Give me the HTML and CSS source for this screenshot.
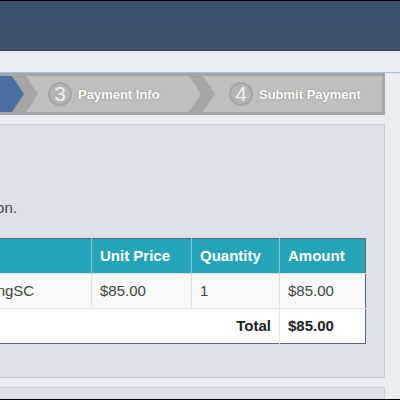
FILE: index.html
```html
<!DOCTYPE html>
<html>
<head>
<meta charset="utf-8">
<title>Checkout - Review Order</title>
<link rel="stylesheet" href="styles.css">
</head>
<body>
<header class="topbar"></header>
<main class="main">
  <div class="container">
    <nav class="steps">
      <div class="step step--done"><span class="step-num">1</span><span class="step-label">Select Items</span></div>
      <div class="step step--active"><span class="step-num">2</span><span class="step-label">Review Order</span></div>
      <div class="step"><span class="step-num">3</span><span class="step-label">Payment Info</span></div>
      <div class="step step--last"><span class="step-num">4</span><span class="step-label">Submit Payment</span></div>
    </nav>
    <section class="panel">
      <h2 class="panel-title">Review Order</h2>
      <p class="panel-text">Please review your order below for confirmation.</p>
      <table class="order">
        <colgroup>
          <col>
          <col class="col-price">
          <col class="col-qty">
          <col class="col-amount">
        </colgroup>
        <thead>
          <tr><th>Item</th><th>Unit Price</th><th>Quantity</th><th>Amount</th></tr>
        </thead>
        <tbody>
          <tr class="row-item"><td>Spring 2024 Registration - U9 Girls - WyomingSC</td><td>$85.00</td><td>1</td><td>$85.00</td></tr>
          <tr class="row-total"><td colspan="3" class="total-label">Total</td><td class="total-value">$85.00</td></tr>
        </tbody>
      </table>
    </section>
    <section class="panel panel--next"></section>
  </div>
</main>
</body>
</html>
```

FILE: styles.css
```css
html, body {
  overflow: hidden;
}
body {
  margin: 0;
  background: #e9ecf1;
  font-family: "Liberation Sans", Arial, sans-serif;
  color: #444;
}
body::after {
  content: "";
  position: fixed;
  left: 0;
  right: 0;
  bottom: 0;
  height: 1px;
  background: #000;
}
.topbar {
  height: 49px;
  background: #3d5170;
  border-top: 1px solid #000;
  border-bottom: 1px solid #2c3a50;
  margin-bottom: 21px;
}
.main {
  border-top: 1px solid #a2bfea;
  padding-right: 15px;
}
.container {
  margin-left: -331px;
}
.steps {
  display: flex;
  gap: 2px;
  height: 36px;
  background: #a6a6a6;
  border: 3px solid #a6a6a6;
}
.step {
  flex: 0 0 175px;
  display: flex;
  align-items: center;
  padding-left: 22px;
  box-sizing: border-box;
  background: #bfbfbf;
  clip-path: polygon(0 0, calc(100% - 12px) 0, 100% 50%, calc(100% - 12px) 100%, 0 100%, 12px 50%);
}
.step--done {
  background: #6f8fb8;
  clip-path: polygon(0 0, calc(100% - 12px) 0, 100% 50%, calc(100% - 12px) 100%, 0 100%);
}
.step--active {
  background: #4b6fa0;
}
.step--last {
  flex: 1 1 auto;
  padding-left: 26px;
  clip-path: polygon(0 0, 100% 0, 100% 100%, 0 100%, 12px 50%);
}
.step-num {
  flex: none;
  width: 20px;
  height: 20px;
  border: 2px solid #a5a5a5;
  border-radius: 50%;
  background: #b4b4b4;
  color: #efefef;
  font-size: 21px;
  line-height: 20px;
  display: flex;
  align-items: center;
  justify-content: center;
  margin-right: 6px;
}
.step-label {
  color: #fff;
  font-size: 13px;
  font-weight: bold;
  white-space: nowrap;
  text-shadow: 0 0 2px rgba(0, 0, 0, 0.35);
}
.panel {
  margin-top: 9px;
  background: #dce0e9;
  border: 1px solid #c7cdd9;
  padding: 18px 18px 18px 26px;
}
.panel--next {
  height: 40px;
}
.panel-title {
  margin: 0 0 29px;
  font-size: 20px;
  line-height: 26px;
  color: #333;
}
.panel-text {
  margin: 0 0 20px;
  font-size: 15px;
  line-height: 20px;
  color: #444;
}
.order {
  width: 100%;
  table-layout: fixed;
  border-collapse: collapse;
  border: 1px solid #5d6577;
  margin-bottom: 15px;
  font-size: 15px;
  line-height: 18px;
}
.col-price { width: 100px; }
.col-qty { width: 88px; }
.col-amount { width: 86px; }
.order th {
  background: #25a4b8;
  color: #fff;
  font-weight: bold;
  text-align: left;
  padding: 8px;
  border-right: 1px solid #86ccd7;
  white-space: nowrap;
}
.order th:last-child {
  border-right: none;
}
.order td {
  padding: 8px;
  border-top: 1px solid #e1e1e1;
  border-right: 1px solid #e1e1e1;
  color: #444;
  white-space: nowrap;
  overflow: hidden;
}
.order td:last-child {
  border-right: none;
}
.row-item td {
  background: #f8f8f8;
}
.row-total td {
  background: #fff;
}
.total-label {
  text-align: right;
  font-weight: bold;
  color: #222 !important;
}
.total-value {
  font-weight: bold;
  color: #222 !important;
}
```
